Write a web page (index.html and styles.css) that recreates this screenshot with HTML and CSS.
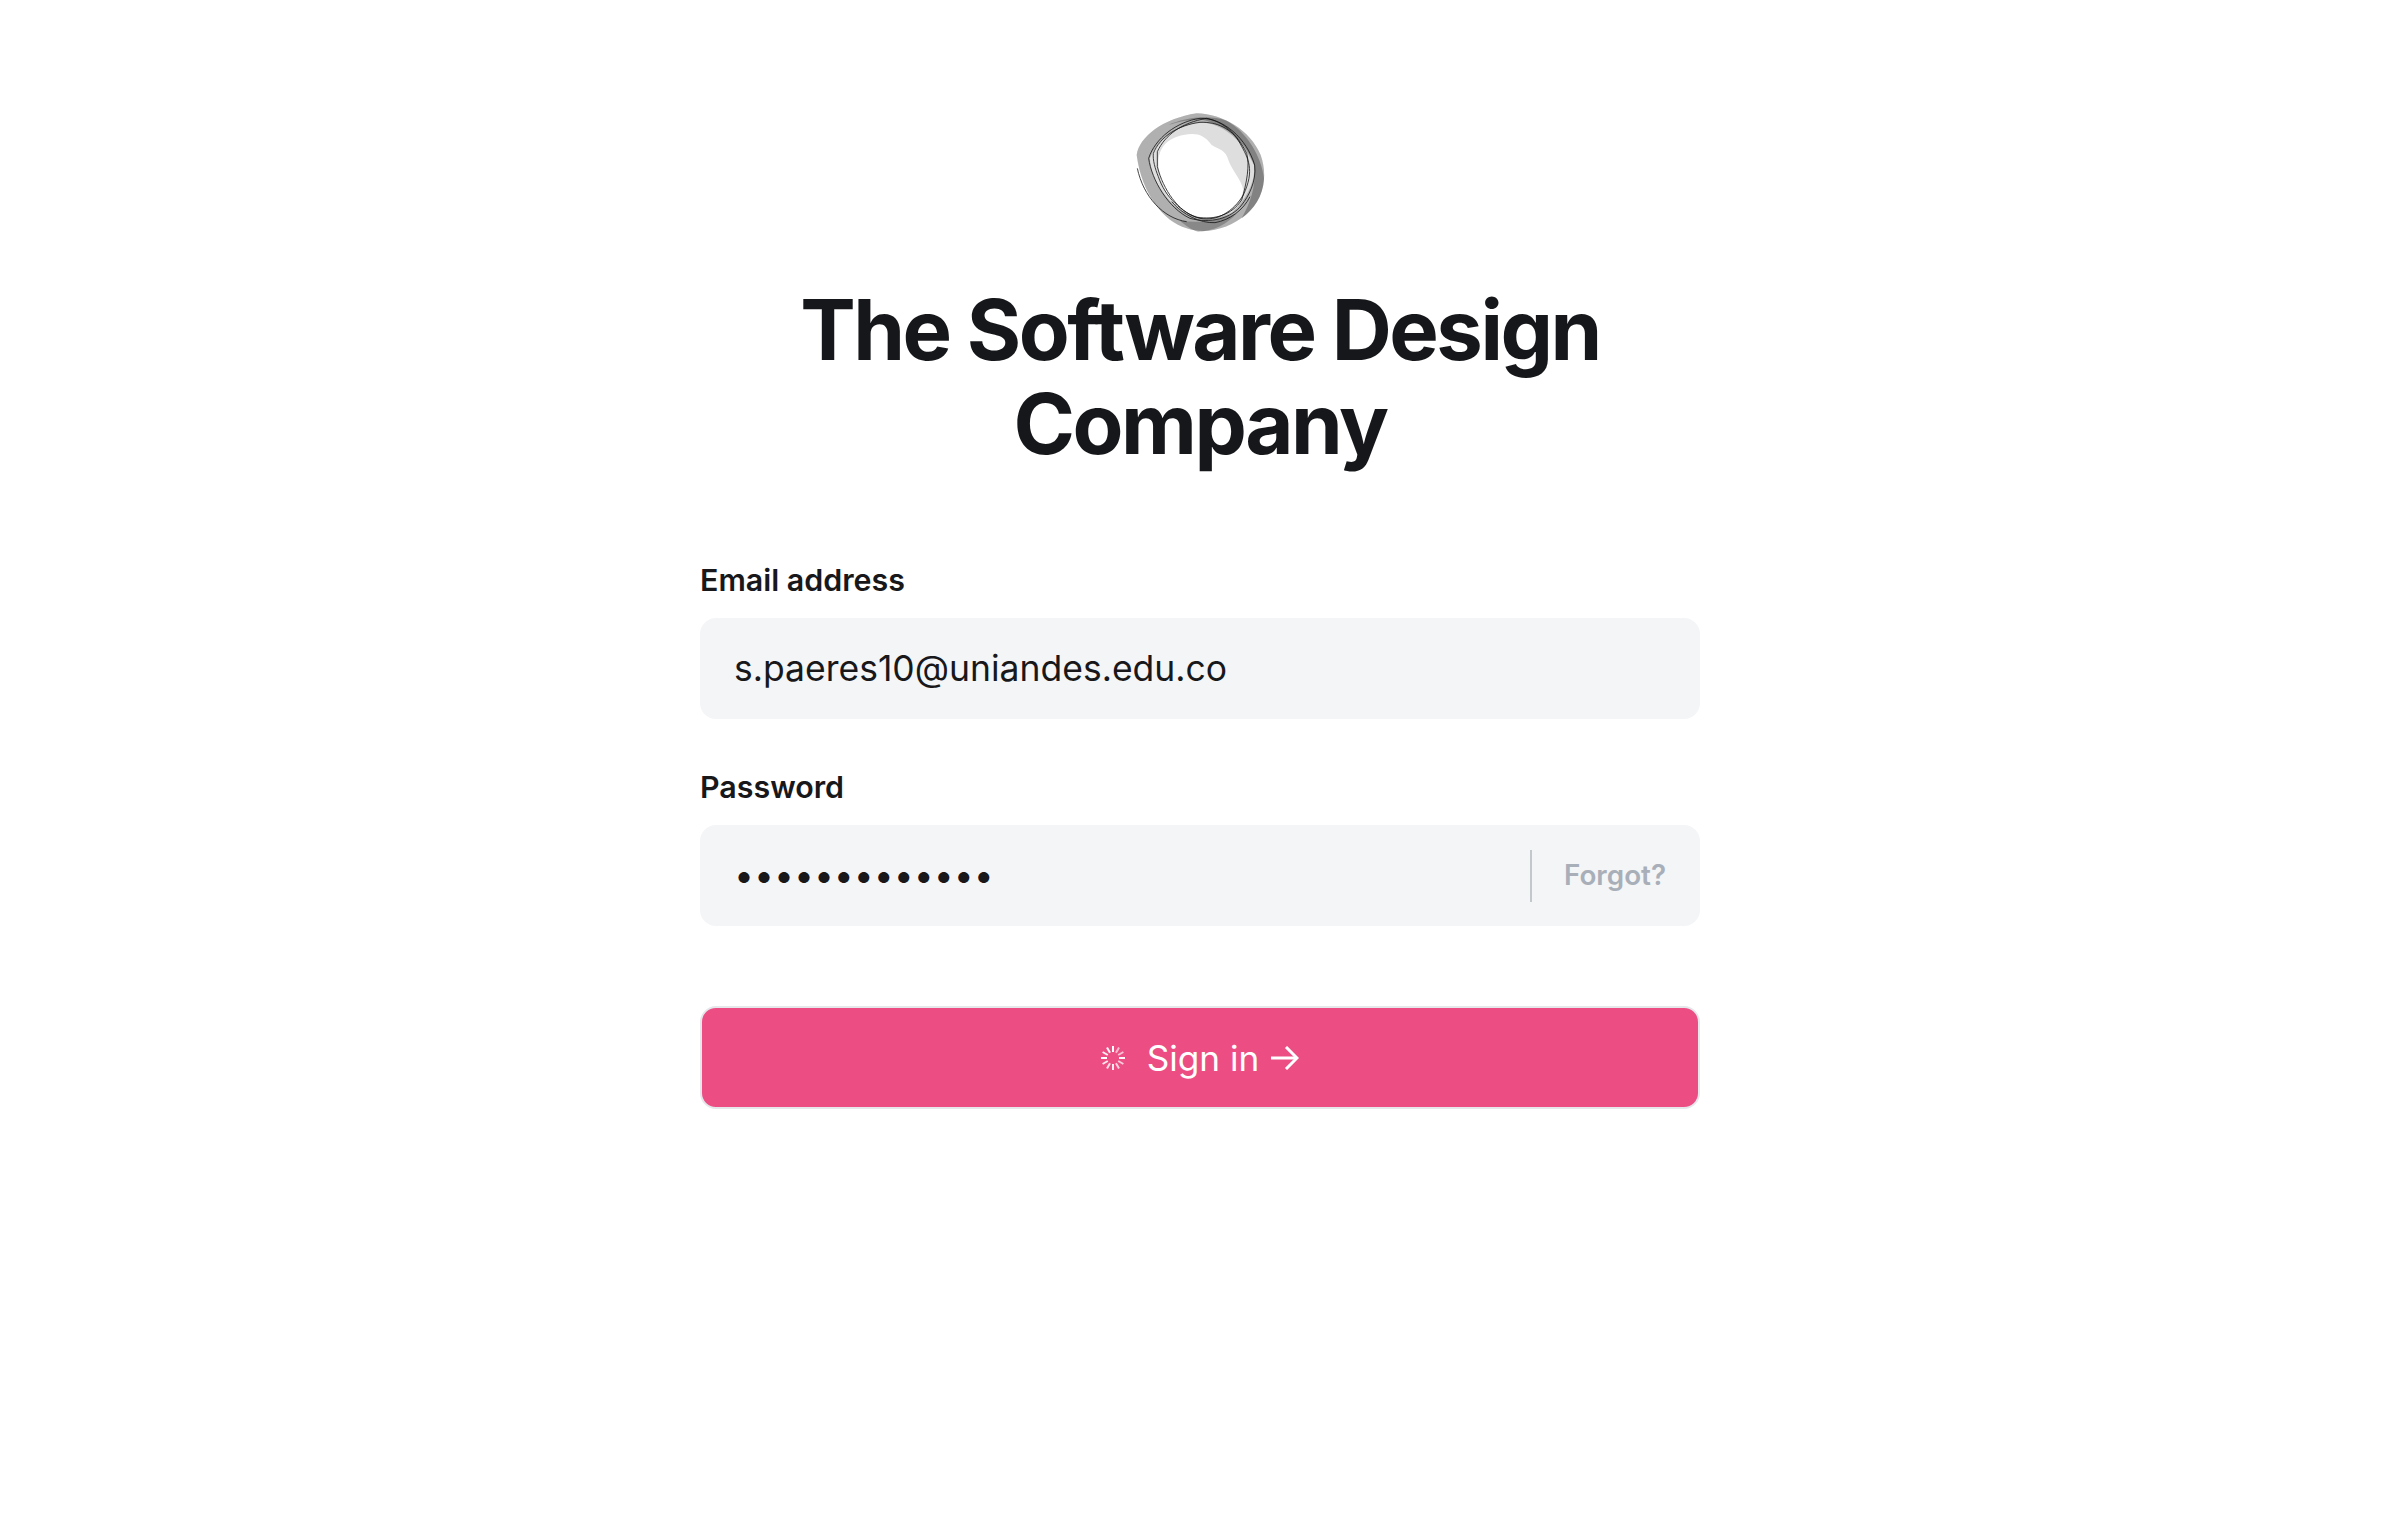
FILE: index.html
```html
<!DOCTYPE html>
<html>
<head>
  <title>Sign in</title>
  <link rel="stylesheet" href="styles.css">
</head>
<body>
  <main class="wrap">
    <svg class="logo" viewBox="0 0 600 480" aria-hidden="true">
      <defs>
        <filter id="soft"><feGaussianBlur stdDeviation="1"/></filter>
      </defs>
      <g filter="url(#soft)">
        <path fill="#dedede" fill-rule="evenodd" d="M110 195C118 140 190 85 290 70C370 72 450 120 482 195C505 260 490 330 440 372C390 415 320 435 260 415C190 395 125 310 110 195ZM175 215C178 165 210 143 250 135C285 128 310 130 335 165C355 178 378 180 385 210C395 240 425 270 430 300C425 335 395 365 350 382C310 390 260 380 225 345C195 310 175 260 175 215Z"/>
        <path fill="#777" fill-opacity="0.45" fill-rule="evenodd" d="M110 195C118 140 190 85 290 70C370 72 450 120 482 195C505 260 490 330 440 372C390 415 320 435 260 415C190 395 125 310 110 195ZM150 205C170 150 225 110 290 98C350 92 420 135 462 225C468 270 440 330 395 368C340 395 270 385 222 345C185 310 150 255 150 205Z"/>
        <path fill="#222" fill-opacity="0.32" d="M205 105C250 85 320 72 380 92C440 125 485 200 492 265C490 320 460 360 425 385C450 340 470 290 462 225C440 160 385 105 300 88C265 90 235 95 205 105Z"/>
        <path fill="#222" fill-opacity="0.28" d="M240 392C290 400 350 395 410 370C385 400 340 425 295 425C275 420 255 405 240 392Z"/>
        <g fill="none" stroke="#111" stroke-opacity="0.78" stroke-width="3">
          <path d="M146 205C165 145 230 95 300 85C370 83 440 145 464 225C470 275 445 320 425 345C395 385 330 402 270 385C205 355 155 270 146 205Z"/>
          <path d="M160 190C180 140 235 105 300 97C350 95 395 115 420 160C445 205 465 240 430 315C400 365 350 395 300 385C245 370 195 320 175 260C165 235 158 210 160 190Z"/>
          <path d="M172 185C195 135 245 98 320 85C370 95 410 130 440 190C450 225 440 280 425 330C395 375 345 390 290 382C235 365 190 300 172 230Z"/>
          <path d="M215 335C250 375 300 400 345 398C390 390 430 360 450 320"/>
          <path d="M112 235C130 320 190 385 260 395"/>
        </g>
      </g>
    </svg>
    <h1 class="title">The Software Design Company</h1>
    <form class="form">
      <label class="lbl" for="email">Email address</label>
      <input class="field" id="email" type="email" value="s.paeres10@uniandes.edu.co">
      <label class="lbl" for="pass">Password</label>
      <div class="field pass-row">
        <input class="pass" id="pass" type="password" value="aaaaaaaaaaaaa">
        <a class="forgot" href="#">Forgot?</a>
      </div>
      <button class="submit" type="button">
        <svg class="spin" viewBox="0 0 24 24" stroke="#fff" stroke-width="2">
          <line x1="12" y1="0" x2="12" y2="6"/>
          <line x1="12" y1="0" x2="12" y2="6" opacity="0.6" transform="rotate(30 12 12)"/>
          <line x1="12" y1="0" x2="12" y2="6" opacity="0.65" transform="rotate(60 12 12)"/>
          <line x1="12" y1="0" x2="12" y2="6" opacity="0.95" transform="rotate(90 12 12)"/>
          <line x1="12" y1="0" x2="12" y2="6" opacity="0.7" transform="rotate(120 12 12)"/>
          <line x1="12" y1="0" x2="12" y2="6" opacity="0.75" transform="rotate(150 12 12)"/>
          <line x1="12" y1="0" x2="12" y2="6" opacity="0.9" transform="rotate(180 12 12)"/>
          <line x1="12" y1="0" x2="12" y2="6" opacity="0.8" transform="rotate(210 12 12)"/>
          <line x1="12" y1="0" x2="12" y2="6" opacity="0.85" transform="rotate(240 12 12)"/>
          <line x1="12" y1="0" x2="12" y2="6" transform="rotate(270 12 12)"/>
          <line x1="12" y1="0" x2="12" y2="6" opacity="0.9" transform="rotate(300 12 12)"/>
          <line x1="12" y1="0" x2="12" y2="6" opacity="0.95" transform="rotate(330 12 12)"/>
        </svg>
        <span>Sign in</span>
        <svg class="arrow" viewBox="0 0 28 24" fill="none" stroke="#fff" stroke-width="3">
          <path d="M0 12H26"/><path d="M15 1L26 12L15 23"/>
        </svg>
      </button>
    </form>
  </main>
</body>
</html>
```

FILE: styles.css
```css
html, body {
  margin: 0;
  background: #fff;
}
body {
  font-family: Inter, "Liberation Sans", sans-serif;
  color: #18181b;
}
.wrap {
  width: 1000px;
  margin: 0 auto;
  padding-top: 90px;
  display: flex;
  flex-direction: column;
  align-items: center;
}
.logo {
  width: 200px;
  height: 160px;
}
.title {
  margin: 33px 0 0;
  width: 900px;
  font-size: 83.2px;
  line-height: 94px;
  font-weight: 700;
  letter-spacing: -0.03em;
  text-align: center;
  color: #16171b;
}
.form {
  width: 100%;
  margin-top: 89px;
  display: flex;
  flex-direction: column;
}
.lbl {
  font-size: 30.4px;
  line-height: 40px;
  font-weight: 600;
  margin-bottom: 18px;
}
.field {
  box-sizing: border-box;
  width: 100%;
  height: 101px;
  margin: 0 0 48px;
  padding: 0 34px;
  border: 0;
  border-radius: 16px;
  background: #f4f5f7;
  font: 35.5px Inter, sans-serif;
  color: #18181b;
  outline: none;
}
.pass-row {
  display: flex;
  align-items: center;
  margin-bottom: 80px;
}
.pass {
  flex: 1;
  min-width: 0;
  border: 0;
  padding: 0;
  background: none;
  font: 35.5px Inter, sans-serif;
  color: #18181b;
  outline: none;
}
.forgot {
  border-left: 2px solid #c4c7cc;
  height: 52px;
  line-height: 50px;
  padding-left: 32px;
  font-size: 27.8px;
  font-weight: 600;
  color: #a9afb9;
  text-decoration: none;
}
.submit {
  height: 103px;
  border: 2px solid #e5e7eb;
  border-radius: 16px;
  background: #ec4e84;
  color: #fff;
  font: 35.2px Inter, sans-serif;
  display: flex;
  align-items: center;
  justify-content: center;
}
.spin {
  width: 24px;
  height: 24px;
  margin-right: 22px;
}
.arrow {
  width: 28px;
  height: 24px;
  margin-left: 12px;
}
```
